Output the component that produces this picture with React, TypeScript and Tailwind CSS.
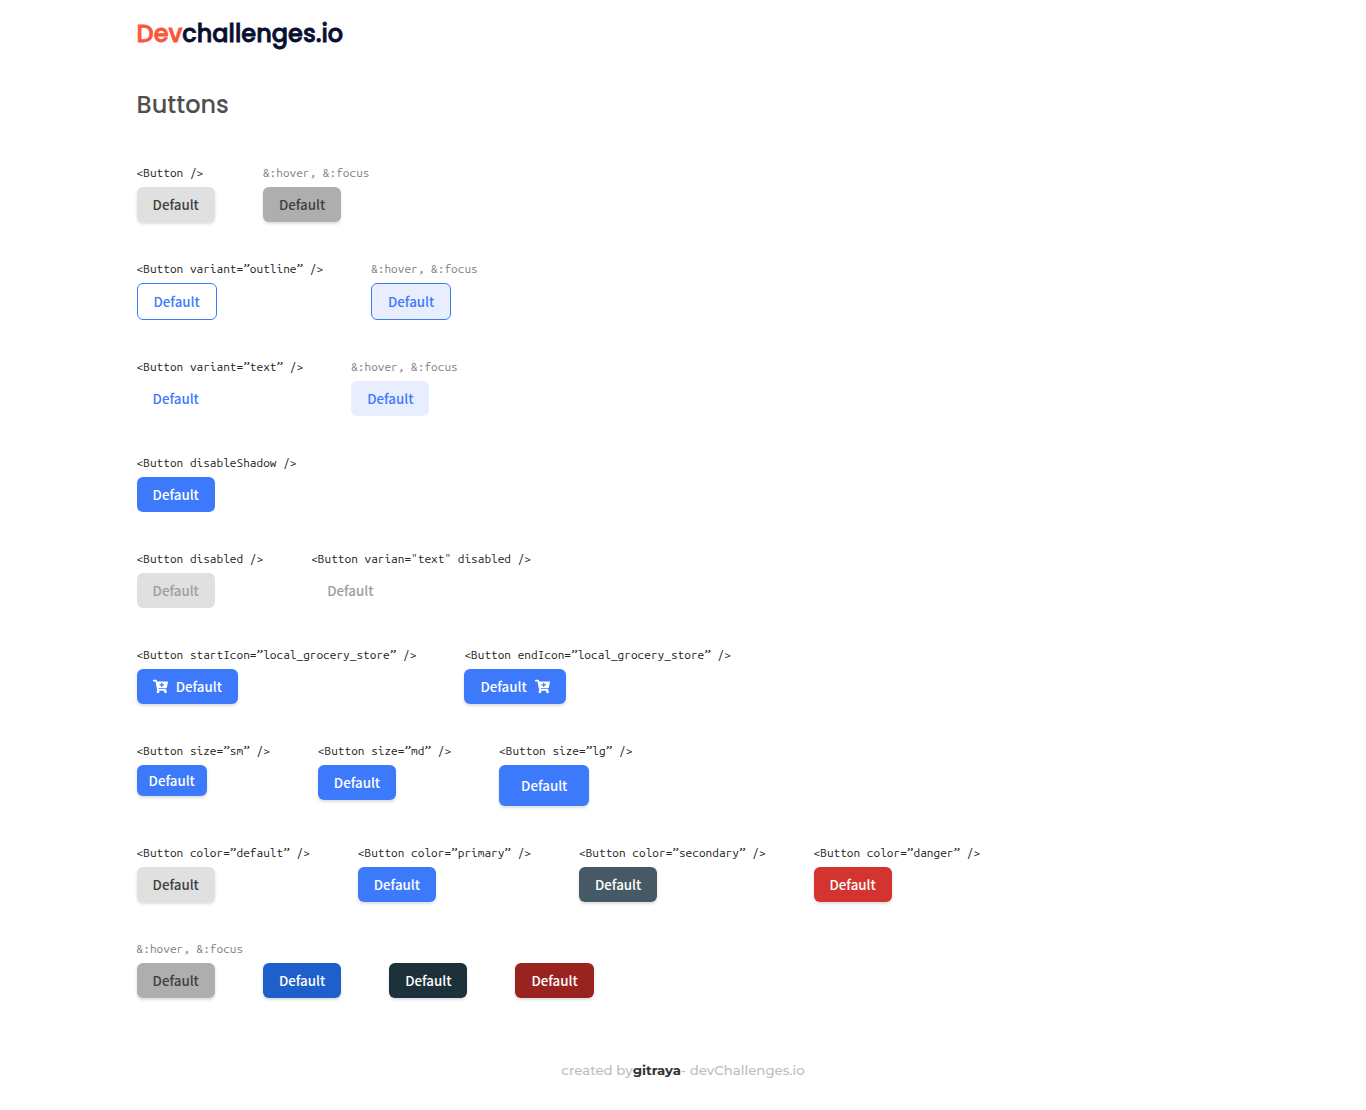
import type { ReactNode } from "react";
import { FaCartPlus } from "react-icons/fa";

type ButtonProps = {
  look: string;
  size?: string;
  startIcon?: boolean;
  endIcon?: boolean;
};

const MD = "h-[35px] w-[78.3px]";
const SM = "h-[31px] w-[70.3px]";
const LG = "h-[41px] w-[90.3px]";
const OUT = "h-[37px] w-[80.2px]";
const ICON = "h-[35px] w-[101.5px]";

const shadow = "shadow-[0_2px_3px_rgba(51,51,51,0.17)] ";
const gray = "bg-[#e0e0e0] text-[#3f3f3f] shadow-[0_2px_3px_rgba(51,51,51,0.17)]";
const grayHover = "bg-[#aeaeae] text-[#3f3f3f] shadow-[0_2px_3px_rgba(51,51,51,0.17)]";
const blue = "bg-[#3d7afb] text-white ";

function Button({ look, size = MD, startIcon, endIcon }: ButtonProps) {
  return (
    <button
      className={`flex items-center justify-center gap-2 rounded-md font-['Noto_Sans_CJK_JP',sans-serif] text-[13.333px] font-medium leading-[19px] ${size} ${look}`}
    >
      {startIcon && <FaCartPlus className="size-[15px]" />}
      <span>Default</span>
      {endIcon && <FaCartPlus className="size-[15px]" />}
    </button>
  );
}

function Label({ children, muted }: { children: ReactNode; muted?: boolean }) {
  return (
    <p
      className={`mb-1 h-5 whitespace-pre font-['Ubuntu_Mono','DejaVu_Sans_Mono',monospace] text-[11.907px] leading-5 tracking-[0.003px] ${
        muted ? "text-[#828282]" : "text-[#222222]"
      }`}
    >
      {children}
    </p>
  );
}

function Item({ label, muted, children }: { label: string; muted?: boolean; children: ReactNode }) {
  return (
    <div>
      <Label muted={muted}>{label}</Label>
      {children}
    </div>
  );
}

function Row({ children }: { children: ReactNode }) {
  return <div className="mb-[37px] flex items-start gap-12">{children}</div>;
}

const HOVER = "&:hover, &:focus";

export default function App() {
  return (
    <div className="flex h-[1110px] flex-col bg-white px-[136.6px]">
      <h1 className="mt-4 h-9 font-['Poppins','Lato',sans-serif] text-2xl font-medium leading-9 tracking-[0.02px] text-[#090f31] [-webkit-text-stroke:0.8px]">
        <span className="text-[#f9573a]">Dev</span>challenges.io
      </h1>
      <h2 className="mt-[35px] h-9 font-['Poppins','Lato',sans-serif] text-2xl font-medium leading-9 text-[#4f4f4f]">
        Buttons
      </h2>
      <main className="mt-10">
        <Row>
          <Item label="<Button />"><Button look={gray} /></Item>
          <Item label={HOVER} muted><Button look={grayHover} /></Item>
        </Row>
        <Row>
          <Item label="<Button variant=”outline” />">
            <Button size={OUT} look="border border-[#3d7afb] text-[#3d7afb]" />
          </Item>
          <Item label={HOVER} muted>
            <Button size={OUT} look="border border-[#3d7afb] bg-[#e9eeff] text-[#3d7afb]" />
          </Item>
        </Row>
        <Row>
          <Item label="<Button variant=”text” />"><Button look="text-[#3d7afb]" /></Item>
          <Item label={HOVER} muted><Button look="bg-[#e9eeff] text-[#3d7afb]" /></Item>
        </Row>
        <Row>
          <Item label="<Button disableShadow />"><Button look={blue} /></Item>
        </Row>
        <Row>
          <Item label="<Button disabled />"><Button look="bg-[#e0e0e0] text-[#9e9e9e]" /></Item>
          <Item label={'<Button varian="text" disabled />'}><Button look="text-[#9e9e9e]" /></Item>
        </Row>
        <Row>
          <Item label="<Button startIcon=”local_grocery_store” />">
            <Button size={ICON} look={blue + shadow} startIcon />
          </Item>
          <Item label="<Button endIcon=”local_grocery_store” />">
            <Button size={ICON} look={blue + shadow} endIcon />
          </Item>
        </Row>
        <Row>
          <Item label="<Button size=”sm” />"><Button size={SM} look={blue + shadow} /></Item>
          <Item label="<Button size=”md” />"><Button look={blue + shadow} /></Item>
          <Item label="<Button size=”lg” />"><Button size={LG} look={blue + shadow} /></Item>
        </Row>
        <Row>
          <Item label="<Button color=”default” />"><Button look={gray} /></Item>
          <Item label="<Button color=”primary” />"><Button look={blue + shadow} /></Item>
          <Item label="<Button color=”secondary” />"><Button look={shadow + "bg-[#455a64] text-white"} /></Item>
          <Item label="<Button color=”danger” />"><Button look={shadow + "bg-[#d4342f] text-white"} /></Item>
        </Row>
        <Label muted>{HOVER}</Label>
        <Row>
          <Button look={grayHover} />
          <Button look={shadow + "bg-[#1f5fcc] text-white"} />
          <Button look={shadow + "bg-[#1c313a] text-white"} />
          <Button look={shadow + "bg-[#99231f] text-white"} />
        </Row>
      </main>
      <footer className="mt-[25px] flex h-5 justify-center whitespace-pre font-['Montserrat','Open_Sans',sans-serif] text-[13.333px] font-medium leading-5 text-[#bdbdbd]">
        created by<b className="font-bold text-[#333333]">gitraya</b>- devChallenges.io
      </footer>
    </div>
  );
}
